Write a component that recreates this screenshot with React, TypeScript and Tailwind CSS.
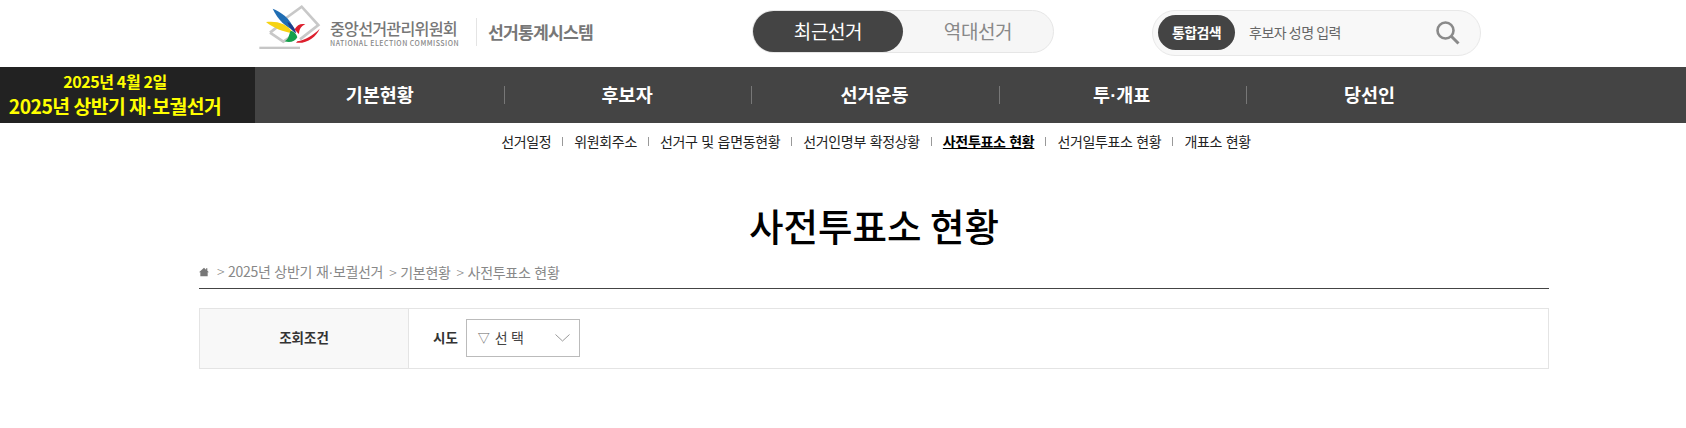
const font = "[font-family:'Noto_Sans_CJK_KR','Noto_Sans',sans-serif]";

function Dot() {
  return <span className="[font-family:'Liberation_Sans',sans-serif]">·</span>;
}

function Logo() {
  return (
    <svg width="80" height="55" viewBox="0 0 240 165" className="shrink-0">
      <path d="M100 60 L155 20 L205 75 L150 118 M60 98 L100 125 L125 108 M60 98 L88 76" fill="none" stroke="#c8c8c8" strokeWidth="8" />
      <rect x="28" y="140" width="122" height="7" fill="#c6c6c6" />
      <path d="M68 26 C92 36 120 52 134 92 C108 82 84 60 68 26Z" fill="#1f6db3" />
      <path d="M48 66 C76 62 112 68 130 100 C100 96 70 84 48 66Z" fill="#f6d312" />
      <path d="M112 66 C126 72 136 84 138 100 C130 96 118 84 112 66Z" fill="#1f3f8a" />
      <path d="M122 92 C116 104 118 114 104 124 C120 130 136 124 142 112 C140 102 132 94 122 92Z" fill="#14a04c" />
      <path d="M134 88 C142 74 152 70 166 73 C154 78 148 86 147 102 C142 98 138 94 134 88Z" fill="#dd1f2d" />
      <path d="M142 124 C166 120 190 106 209 86 C198 112 170 132 138 128Z" fill="#dd1f2d" />
    </svg>
  );
}

const subnav = ["선거일정", "위원회주소", "선거구 및 읍면동현황", "선거인명부 확정상황", "사전투표소 현황", "선거일투표소 현황", "개표소 현황"];

export default function App() {
  return (
    <div className={`${font} bg-white min-h-[428px] w-[1686px] overflow-hidden`}>
      <header className="h-[67px] flex items-center pl-[250px]">
        <div className="w-[502px] flex items-center pb-[12px] h-[67px] shrink-0">
          <Logo />
          <div className="flex flex-col items-start text-[#777] w-[128px] mt-[9px]">
            <span className="text-[16.2px] leading-[20px] font-medium tracking-[-0.8px] whitespace-nowrap">중앙선거관리위원회</span>
            <span className="text-[7px] leading-[8px] font-medium tracking-[0.5px] whitespace-nowrap mt-[1px] text-[#888]">NATIONAL ELECTION COMMISSION</span>
          </div>
          <div className="w-px h-[28px] bg-[#e4e4e4] ml-[18px] mt-[8px]" />
          <span className="ml-[11px] mt-[9px] text-[17.2px] font-bold tracking-[-0.8px] text-[#777] whitespace-nowrap">선거통계시스템</span>
        </div>
        <div className="w-[302px] h-[43px] rounded-full bg-[#f6f6f6] border border-[#e6e6e6] flex items-center mb-[4px] shrink-0">
          <div className="w-[150px] h-[41px] rounded-full bg-[#444] text-white text-[19px] flex items-center justify-center tracking-[-0.4px]">최근선거</div>
          <div className="flex-1 text-center text-[#888] text-[19px] tracking-[-0.4px]">역대선거</div>
        </div>
        <div className="ml-[98px] w-[329px] h-[46px] rounded-full bg-[#f8f8f8] border border-[#e8e8e8] flex items-center pl-[5px] pr-[20px] mb-[2px] shrink-0">
          <div className="w-[77px] h-[35px] rounded-full bg-[#444] text-white text-[14px] font-bold flex items-center justify-center tracking-[-0.6px] whitespace-nowrap">통합검색</div>
          <span className="ml-[14px] text-[14px] text-[#666] tracking-[-0.5px]">후보자 성명 입력</span>
          <svg className="ml-auto" width="24" height="24" viewBox="0 0 24 24" fill="none" stroke="#8a8a8a" strokeWidth="2.6">
            <circle cx="9.5" cy="9.5" r="8" />
            <path d="M15.5 15.5 L22.5 22.5" strokeWidth="3" />
          </svg>
        </div>
      </header>

      <nav className="h-[56px] flex bg-[#444]">
        <div className="w-[255px] bg-[#222] flex flex-col items-center justify-center text-[#ffff00] font-bold pr-[25px]">
          <span className="text-[16px] leading-[24px] tracking-[-0.4px] whitespace-nowrap">2025년 4월 2일</span>
          <span className="text-[19.3px] leading-[26px] tracking-[-0.5px] whitespace-nowrap">2025년 상반기 재<Dot />보궐선거</span>
        </div>
        <ul className="flex items-center pl-[2.7px] text-white text-[18.5px] font-bold">
          <li className="w-[247.3px] h-[18px] flex items-center justify-center border-r border-[#777] pr-[2px]">기본현황</li>
          <li className="w-[247.3px] h-[18px] flex items-center justify-center border-r border-[#777] pr-[2px]">후보자</li>
          <li className="w-[247.3px] h-[18px] flex items-center justify-center border-r border-[#777] pr-[2px]">선거운동</li>
          <li className="w-[247.3px] h-[18px] flex items-center justify-center border-r border-[#777] pr-[2px]"><span>투<Dot />개표</span></li>
          <li className="w-[247.3px] h-[18px] flex items-center justify-center pr-[2px]">당선인</li>
        </ul>
      </nav>

      <ul className="h-[36px] flex items-center justify-center text-[14px] text-[#222] tracking-[-0.35px] [word-spacing:1px] pl-[66px]">
        {subnav.map((s, i) => (
          <li key={s} className="flex items-center whitespace-nowrap">
            {i > 0 && <span className="w-px h-[9px] bg-[#999] mx-[11px]" />}
            <span className={i === 4 ? "font-bold underline text-black" : ""}>{s}</span>
          </li>
        ))}
      </ul>

      <main className="ml-[199px] w-[1350px]">
        <h1 className="text-center text-[37.5px] leading-[50px] font-medium text-black mt-[41px]">사전투표소 현황</h1>
        <div className="h-[37px] mt-[2px] flex items-center text-[14px] text-[#888] border-b border-[#444] tracking-[-0.3px] [word-spacing:1px] pt-[4px]">
          <svg width="10" height="10" viewBox="0 0 12 12" fill="#777"><path d="M6 1 L8.5 3.2 V1.5 H10 V4.5 L12 6.2 H10.4 V11 H1.6 V6.2 H0 Z" /></svg>
          <span className="ml-[8px] whitespace-pre"><span className="font-light">&gt;</span> 2025년 상반기 재<Dot />보궐선거</span>
          <span className="ml-[6px] whitespace-pre"><span className="font-light">&gt;</span> 기본현황</span>
          <span className="ml-[6px] whitespace-pre"><span className="font-light">&gt;</span> 사전투표소 현황</span>
        </div>
        <div className="mt-[19px] h-[61px] flex border border-[#e4e4e4]">
          <div className="w-[209px] bg-[#f8f8f8] border-r border-[#e4e4e4] flex items-center justify-center text-[13.5px] font-bold text-[#333] pb-[3px]">조회조건</div>
          <div className="flex items-center pl-[24px] pb-[2px]">
            <span className="text-[13.5px] font-bold text-[#333]">시도</span>
            <div className="ml-[8px] w-[114px] h-[38px] border border-[#bbb] flex items-center pl-[11px] pr-[9px] text-[14px] text-[#444]">
              <span className="text-[12px] text-[#666]">▽</span>
              <span className="ml-[5px] whitespace-pre">선 택</span>
              <svg className="ml-auto" width="15" height="8" viewBox="0 0 15 8" fill="none" stroke="#999"><path d="M0.5 0.5 L7.5 7 L14.5 0.5" /></svg>
            </div>
          </div>
        </div>
      </main>
    </div>
  );
}
